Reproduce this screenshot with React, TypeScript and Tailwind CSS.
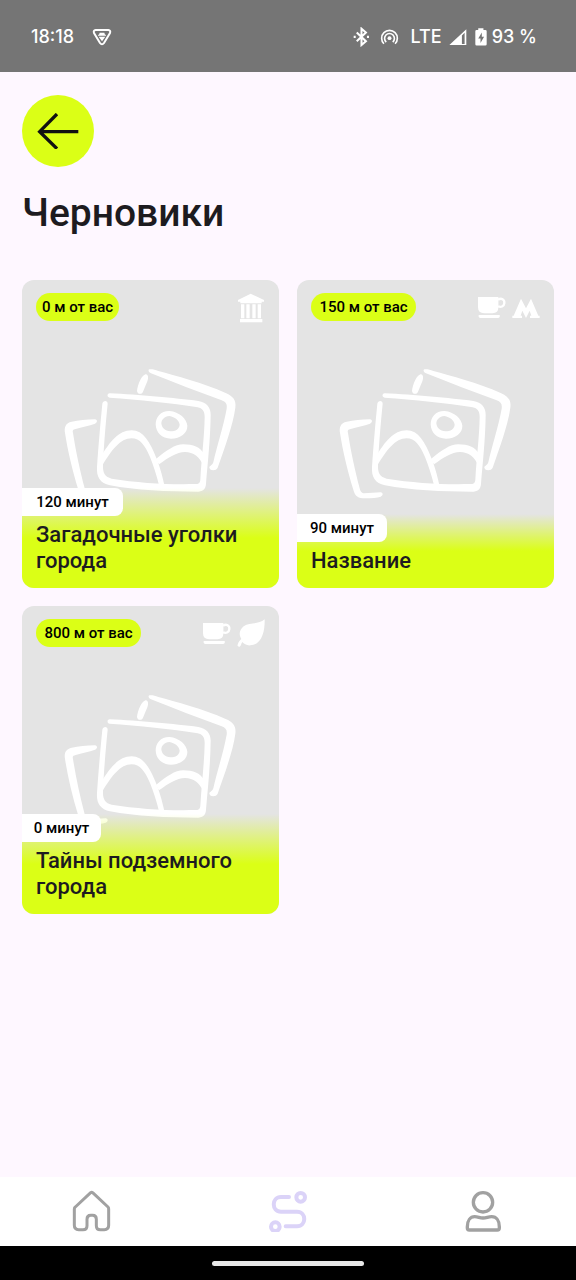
import type { ReactNode } from "react";

type PlaceKind = "museum" | "cafe" | "metro" | "park";

interface Draft {
  title: string;
  meters: number;
  minutes: number;
  kinds: PlaceKind[];
}

const drafts: Draft[] = [
  { title: "Загадочные уголки города", meters: 0, minutes: 120, kinds: ["museum"] },
  { title: "Название", meters: 150, minutes: 90, kinds: ["cafe", "metro"] },
  { title: "Тайны подземного города", meters: 800, minutes: 0, kinds: ["cafe", "park"] },
];

// Labels grow by a fixed step for every digit of the number they show.
const DIGIT_STEP = 11;
const labelWidth = (base: number, value: number) => base + DIGIT_STEP * String(value).length;

const kindIcons: Record<PlaceKind, ReactNode> = {
  museum: (
    <svg viewBox="0 0 84 90" className="h-[30px] w-7" fill="white" aria-label="Музей">
      <path d="M3 21 L41 2 L81 21 V26 H74 V31 H10 V26 H3Z" />
      <path d="M12 34h10v42H12zM28 34h10v42H28zM46 34h10v42H46zM62 34h10v42H62z" />
      <path d="M9 78h67v10H9z" />
    </svg>
  ),
  cafe: (
    <svg viewBox="0 0 88 84" className="h-7 w-[29px]" fill="none" aria-label="Кафе">
      <path d="M3 12H65V42Q65 61 47 61H22Q3 61 3 42Z" fill="white" />
      <path d="M64 20C74 13 84 20 83 30C82 41 72 44 64 40" stroke="white" strokeWidth="7" />
      <path d="M5 66H69V71Q69 75 64 75H10Q5 75 5 71Z" fill="white" />
    </svg>
  ),
  metro: (
    <svg viewBox="0 0 84 84" className="size-7" fill="white" aria-label="Метро">
      <path d="M27 17 L42 46 L57 17 L79 68 H83 V75 H54 V68 H58 L53 53 L42 75 L31 53 L26 68 H30 V75 H1 V68 H5Z" />
    </svg>
  ),
  park: (
    <svg viewBox="0 0 84 84" className="size-7" fill="white" aria-label="Парк">
      <path d="M83 1C84 34 76 78 40 79C29 80 21 75 16 69C12 73 13 80 8 83C4 84 0 81 2 77C4 69 9 64 13 60C4 46 8 32 20 22C38 8 65 18 83 1Z" />
    </svg>
  ),
};

function PhotoPlaceholder() {
  return (
    <svg viewBox="144 53 525 399" className="w-[175px]" fill="white" aria-hidden="true">
      <path d="M403 57C412 56 420 58 430 62C480 76 565 98 632 128C655 138 664 150 661 172C655 220 630 290 608 352C604 362 585 362 583 352C583 346 592 346 595 336C605 290 625 230 635 175C637 160 632 155 620 150C550 125 480 97 408 69C400 66 399 58 403 57Z" />
      <path d="M389 73C399 68 402 82 397 93L384 124C380 134 366 132 366 121C368 105 377 78 389 73Z" />
      <path d="M284 129C370 133 480 143 550 152C575 156 588 172 587 195C586 270 578 340 573 400C572 418 562 424 545 424C460 424 360 420 285 405C255 398 244 380 246 350C250 290 256 220 262 160C264 149 278 149 278 160C272 220 266 290 264 345C263 368 270 380 290 385C370 398 460 403 540 401C552 401 555 398 556 388C560 320 568 260 569 200C569 182 562 174 548 171C470 158 370 148 284 142C276 141 275 130 284 129Z" />
      <path
        fillRule="evenodd"
        d="M464 182C492 184 516 206 517 226C518 248 496 265 468 265C440 264 423 248 422 222C422 200 438 181 464 182ZM463 197C448 199 440 207 439 219C440 232 450 243 466 243C482 243 493 236 494 223C492 210 480 200 463 197Z"
      />
      <path d="M258 318C285 275 310 240 350 240C385 240 405 275 425 325C437 355 444 385 449 408L432 405C425 375 415 345 405 320C390 285 375 264 350 264C315 264 290 300 262 345Z" />
      <path d="M422 327C455 300 480 282 505 282C535 282 555 290 568 312L564 345C555 320 535 305 510 305C485 305 460 322 432 342Z" />
      <path d="M240 207C215 207 190 210 170 214C152 218 147 230 150 248C158 300 172 360 190 418C195 438 205 444 225 444C245 444 262 442 272 439C280 436 280 427 272 426C255 426 240 429 222 429C214 429 211 422 209 414C195 360 182 300 174 248C172 240 174 238 182 236C200 231 222 226 240 220C248 217 248 208 240 207Z" />
    </svg>
  );
}

function DraftCard({ draft }: { draft: Draft }) {
  return (
    <a href="#draft" className="grid min-h-[308px] overflow-hidden rounded-xl bg-[#e4e4e4]">
      <div className="col-start-1 row-start-1 flex items-center justify-center">
        <PhotoPlaceholder />
      </div>
      <div className="col-start-1 row-start-1 flex flex-col justify-between">
        <div className="flex items-start justify-between px-[14px] pt-[13px]">
          <span
            className="rounded-full bg-[#dbff16] text-center text-[15px] leading-7 font-medium whitespace-nowrap text-black"
            style={{ width: labelWidth(72, draft.meters) }}
          >
            {draft.meters} м от вас
          </span>
          <span className="flex gap-[6px]">
            {draft.kinds.map((kind) => (
              <span key={kind}>{kindIcons[kind]}</span>
            ))}
          </span>
        </div>
        <div className="bg-linear-to-b from-[#dbff16]/0 to-[#dbff16] to-50% pb-[14px]">
          <span
            className="block rounded-r-lg bg-white text-center text-[15px] leading-7 font-medium whitespace-nowrap text-black"
            style={{ width: labelWidth(68, draft.minutes) }}
          >
            {draft.minutes} минут
          </span>
          <h2 className="px-[14px] pt-[6px] text-[22px] leading-[26px] font-medium text-[#1d1b20]">{draft.title}</h2>
        </div>
      </div>
    </a>
  );
}

function StatusBar() {
  return (
    <div className="flex h-[72px] items-center justify-between bg-[#757575] pt-[2px] pr-[39px] pl-[31px] font-['Inter',sans-serif] text-lg font-medium text-white">
      <div className="flex items-center gap-[18px]">
        <span>18:18</span>
        <svg viewBox="279 84 60 56" className="w-5" fill="none" aria-hidden="true">
          <path d="M290 90H328Q336 91 333 99L315 129Q309 137 303 129L285 99Q282 91 290 90Z" stroke="white" strokeWidth="6" />
          <path d="M302 98H316L318 104H321V107H297V104H300ZM299 110H319L309 124Z" fill="white" />
        </svg>
      </div>
      <div className="flex items-center">
        <svg viewBox="40 80 50 58" className="mr-[10px] w-[17px]" fill="none" stroke="white" strokeWidth="6" aria-hidden="true">
          <path d="M51 96L78 122L65 133V85L78 96L51 122" />
          <path d="M42 109h6M81 109h6" />
        </svg>
        <svg viewBox="120 82 58 52" className="mr-3 w-[19px]" fill="none" stroke="white" strokeWidth="5" aria-hidden="true">
          <circle cx="149" cy="113" r="6" fill="white" stroke="none" />
          <path d="M139 125a15 15 0 1 1 20 0M132 130a24 24 0 1 1 34 0" />
        </svg>
        <span>LTE</span>
        <svg viewBox="325 82 56 50" className="ml-[6px] w-[19px]" fill="white" aria-hidden="true">
          <path fillRule="evenodd" d="M379 83V131H327ZM366 101V126H374V93Z" />
        </svg>
        <svg viewBox="406 80 37 56" className="mr-[5px] ml-2 w-3" aria-hidden="true">
          <path d="M416 81H432V86H438Q442 86 442 90V130Q442 134 438 134H411Q407 134 407 130V90Q407 86 411 86H416Z" fill="white" />
          <path d="M427 94L416 112H423V126L434 107H427Z" fill="#757575" />
        </svg>
        <span>93 %</span>
      </div>
    </div>
  );
}

function BottomNav() {
  return (
    <nav className="flex h-[69px] items-center justify-between bg-white pr-[73px] pb-[2px] pl-[72px]">
      <a href="#home" aria-label="Главная">
        <svg viewBox="216 90 117 126" className="w-[39px]" fill="none" stroke="#a1a1a1" strokeWidth="9" strokeLinejoin="round" aria-hidden="true">
          <path d="M272 98Q275 96 278 98L324 141Q326 143 326 147V196Q326 209 313 209H301Q289 209 289 197V178Q289 166 278 166H272Q261 166 261 178V197Q261 209 249 209H236Q223 209 223 196V147Q223 143 226 141Z" />
        </svg>
      </a>
      <a href="#routes" aria-label="Маршруты" aria-current="page">
        <svg viewBox="804 88 120 126" className="w-10" fill="none" stroke="#dbd3f8" strokeWidth="12" strokeLinecap="round" aria-hidden="true">
          <circle cx="902" cy="110" r="13" />
          <circle cx="826" cy="198" r="13" />
          <path d="M867 109H843C814 109 814 153 843 153H891C920 153 920 197 891 197H857" />
        </svg>
      </a>
      <a href="#profile" aria-label="Профиль">
        <svg viewBox="528 90 117 126" className="w-[39px]" fill="none" stroke="#a1a1a1" strokeWidth="10" strokeLinejoin="round" aria-hidden="true">
          <circle cx="585" cy="127" r="29" />
          <path d="M538 200C538 182 547 170 560 170C570 170 575 174 585 174C596 174 600 170 611 170C625 170 634 182 634 200V204Q634 210 628 210H544Q538 210 538 204Z" />
        </svg>
      </a>
    </nav>
  );
}

export default function App() {
  return (
    <div className="flex min-h-screen flex-col bg-[#fef7ff] font-['Roboto',sans-serif]">
      <StatusBar />
      <main className="flex-1 px-[22px] pt-[23px] pb-6">
        <button type="button" aria-label="Назад" className="flex size-[72px] items-center justify-center rounded-full bg-[#dbff16]">
          <svg viewBox="112 98 126 110" className="w-[42px]" fill="none" stroke="#111111" strokeWidth="10" aria-hidden="true">
            <path d="M172 101L120 154L172 205M120 154H236" />
          </svg>
        </button>
        <h1 className="mt-[22px] text-[39px] leading-[48px] font-medium text-[#1d1b20]">Черновики</h1>
        <div className="mt-[43px] grid grid-cols-2 gap-[18px]">
          {drafts.map((draft) => (
            <DraftCard key={draft.title} draft={draft} />
          ))}
        </div>
      </main>
      <BottomNav />
      <div className="flex h-[34px] items-center justify-center bg-black">
        <div className="h-[5px] w-[152px] rounded-full bg-[#e8e8e8]" />
      </div>
    </div>
  );
}
